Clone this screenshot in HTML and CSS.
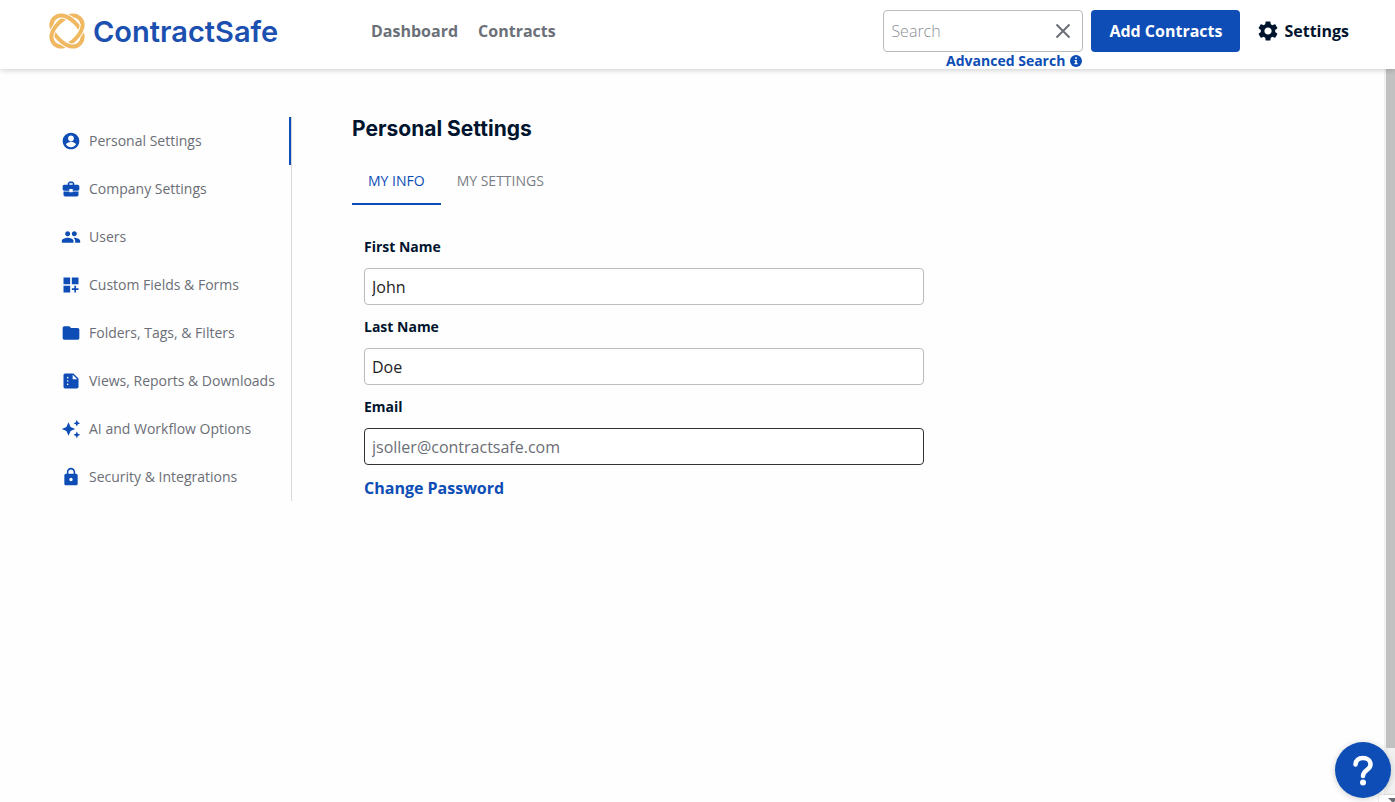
FILE: index.html
```html
<!DOCTYPE html>
<html lang="en">
<head>
    <meta charset="UTF-8">
    <meta name="viewport" content="width=device-width, initial-scale=1.0">
    <title>Personal Settings - ContractSafe</title>
    <link rel="stylesheet" href="styles.css">
</head>
<body>
    <header class="navbar">
        <a class="logo" href="/">
            <svg width="36" height="36" viewBox="-18 -18 36 36" fill="none">
                <defs>
                    <path id="ring" d="M-18 0C-18 -7.100 -11.200 -11.500 0 -11.500S18 -7.100 18 0S11.200 11.500 0 11.500S-18 7.100 -18 0z"/>
                    <clipPath id="sides">
                        <rect x="-18" y="-6" width="9" height="12"/>
                        <rect x="9" y="-6" width="9" height="12"/>
                    </clipPath>
                </defs>
                <use href="#ring" transform="rotate(-45)" stroke="#f0b860" stroke-width="4"/>
                <use href="#ring" transform="rotate(45)" stroke="#fff" stroke-width="6"/>
                <use href="#ring" transform="rotate(45)" stroke="#f0b860" stroke-width="4"/>
                <g clip-path="url(#sides)">
                    <use href="#ring" transform="rotate(-45)" stroke="#fff" stroke-width="6"/>
                    <use href="#ring" transform="rotate(-45)" stroke="#f0b860" stroke-width="4"/>
                </g>
            </svg>
            <span>ContractSafe</span>
        </a>
        <nav class="nav-links">
            <a href="/dashboard">Dashboard</a>
            <a href="/contracts">Contracts</a>
        </nav>
        <div class="nav-actions">
            <div class="search">
                <div class="search-box">
                    <input type="text" placeholder="Search" aria-label="Search">
                    <button type="button" aria-label="Clear search">
                        <svg width="16" height="16" viewBox="0 0 16 16" fill="none" stroke="#6b6e76" stroke-width="2"><path d="M1.500 1.500l13 13M14.500 1.500l-13 13"/></svg>
                    </button>
                </div>
                <a class="advanced" href="/search">Advanced Search
                    <svg width="12" height="12" viewBox="0 0 12 12"><circle cx="6" cy="6" r="6" fill="#0d4db5"/><path d="M5.200 2.300h1.700v1.500H5.200zM4.500 4.900h2.300v3.200h.8v1.200H4.400V8.100h.8v-2h-.7z" fill="#fff"/></svg>
                </a>
            </div>
            <button class="add-button" type="button">Add Contracts</button>
            <a class="settings-link" href="/settings">
                <svg width="24" height="24" viewBox="0 0 24 24"><path d="M19.140 12.940c.04-.3.06-.61.06-.94 0-.32-.02-.64-.07-.94l2.030-1.580c.18-.14.230-.41.120-.61l-1.920-3.320c-.12-.22-.37-.29-.59-.22l-2.390.96c-.5-.38-1.030-.7-1.620-.94l-.36-2.540c-.04-.24-.24-.41-.48-.41h-3.840c-.24 0-.43.17-.47.41l-.36 2.540c-.59.24-1.130.57-1.620.94l-2.390-.96c-.22-.08-.47 0-.59.22L2.740 8.870c-.12.21-.08.47.12.61l2.030 1.580c-.05.3-.09.63-.09.94s.02.64.07.94l-2.030 1.580c-.18.14-.23.41-.12.61l1.920 3.320c.12.22.37.29.59.22l2.390-.96c.5.38 1.030.7 1.620.94l.36 2.540c.05.24.24.41.48.41h3.840c.24 0 .44-.17.47-.41l.36-2.540c.59-.24 1.130-.56 1.620-.94l2.390.96c.22.08.47 0 .59-.22l1.920-3.320c.12-.22.07-.47-.12-.61l-2.010-1.580zM12 15.600c-1.980 0-3.600-1.620-3.600-3.600s1.620-3.600 3.600-3.600 3.600 1.620 3.600 3.600-1.620 3.600-3.600 3.600z"/></svg>
                Settings
            </a>
        </div>
    </header>

    <div class="page">
        <aside class="sidebar">
            <a class="active" href="/settings/personal">
                <svg viewBox="0 0 24 24"><path d="M12 2C6.480 2 2 6.480 2 12s4.480 10 10 10 10-4.480 10-10S17.520 2 12 2zm0 3.500c1.930 0 3.500 1.570 3.500 3.500s-1.570 3.500-3.500 3.500S8.500 10.930 8.500 9 10.070 5.500 12 5.500zm0 14c-2.500 0-4.710-1.280-6-3.220.03-1.990 4-3.080 6-3.080s5.970 1.090 6 3.080c-1.290 1.940-3.500 3.220-6 3.220z"/></svg>
                Personal Settings
            </a>
            <a href="/settings/company">
                <svg viewBox="0 0 24 24"><path d="M10 16v-1H3.010L3 19c0 1.110.89 2 2 2h14c1.110 0 2-.89 2-2v-4h-7v1h-4zm10-9h-4.010V5l-2-2h-4l-2 2v2H4c-1.100 0-2 .9-2 2v3c0 1.110.89 2 2 2h6v-2h4v2h6c1.100 0 2-.9 2-2V9c0-1.100-.9-2-2-2zm-6 0h-4V5h4v2z"/></svg>
                Company Settings
            </a>
            <a href="/settings/users">
                <svg viewBox="0 0 24 24"><path d="M16 11c1.660 0 2.990-1.340 2.990-3S17.660 5 16 5s-3 1.340-3 3 1.340 3 3 3zm-8 0c1.660 0 2.990-1.340 2.990-3S9.660 5 8 5 5 6.340 5 8s1.340 3 3 3zm0 2c-2.330 0-7 1.170-7 3.500V19h14v-2.500C15 14.170 10.330 13 8 13zm8 0c-.29 0-.62.02-.97.05 1.160.84 1.970 1.970 1.970 3.450V19h6v-2.500c0-2.330-4.670-3.500-7-3.500z"/></svg>
                Users
            </a>
            <a href="/settings/fields">
                <svg viewBox="0 0 24 24"><path d="M3 3h8v8H3zM13 3h8v8h-8zM3 13h8v8H3zM18 13h-2v3h-3v2h3v3h2v-3h3v-2h-3z"/></svg>
                Custom Fields &amp; Forms
            </a>
            <a href="/settings/folders">
                <svg viewBox="0 0 24 24"><path d="M10 4H4c-1.100 0-1.990.9-1.990 2L2 18c0 1.100.9 2 2 2h16c1.100 0 2-.9 2-2V8c0-1.100-.9-2-2-2h-8l-2-2z"/></svg>
                Folders, Tags, &amp; Filters
            </a>
            <a href="/settings/views">
                <svg viewBox="0 0 24 24"><path d="M15 3H5c-1.100 0-2 .9-2 2v14c0 1.100.9 2 2 2h14c1.100 0 2-.9 2-2V9l-6-6zM8 17c-.55 0-1-.45-1-1s.45-1 1-1 1 .45 1 1-.45 1-1 1zm0-4c-.55 0-1-.45-1-1s.45-1 1-1 1 .45 1 1-.45 1-1 1zm0-4c-.55 0-1-.45-1-1s.45-1 1-1 1 .45 1 1-.45 1-1 1zm6 1V4.500l5.500 5.500H14z"/></svg>
                Views, Reports &amp; Downloads
            </a>
            <a href="/settings/ai">
                <svg viewBox="0 0 24 24"><path d="M19 9l1.250-2.750L23 5l-2.750-1.250L19 1l-1.250 2.750L15 5l2.750 1.250L19 9zm-7.500.5L9 4 6.500 9.500 1 12l5.500 2.500L9 20l2.500-5.500L17 12l-5.500-2.500zM19 15l-1.250 2.750L15 19l2.750 1.250L19 23l1.250-2.750L23 19l-2.750-1.250L19 15z"/></svg>
                AI and Workflow Options
            </a>
            <a href="/settings/security">
                <svg viewBox="0 0 24 24"><path d="M18 8h-1V6c0-2.760-2.240-5-5-5S7 3.240 7 6v2H6c-1.100 0-2 .9-2 2v10c0 1.100.9 2 2 2h12c1.100 0 2-.9 2-2V10c0-1.100-.9-2-2-2zm-6 9c-1.100 0-2-.9-2-2s.9-2 2-2 2 .9 2 2-.9 2-2 2zm3.100-9H8.900V6c0-1.710 1.390-3.100 3.100-3.100s3.100 1.390 3.100 3.100v2z"/></svg>
                Security &amp; Integrations
            </a>
        </aside>

        <main class="content">
            <h1>Personal Settings</h1>
            <div class="tabs" role="tablist">
                <button class="active" type="button" role="tab" aria-selected="true">MY INFO</button>
                <button type="button" role="tab" aria-selected="false">MY SETTINGS</button>
            </div>
            <form class="info-form">
                <label for="firstName">First Name</label>
                <input type="text" id="firstName" value="John">
                <label for="lastName">Last Name</label>
                <input type="text" id="lastName" value="Doe">
                <label for="email">Email</label>
                <input type="email" id="email" value="jsoller@contractsafe.com" readonly>
                <a href="/change-password">Change Password</a>
            </form>
        </main>

        <div class="scroll-track"><div class="scroll-thumb"></div></div>
    </div>

    <div class="corner-menu"><svg width="10" height="5" viewBox="0 0 10 5"><path d="M0 0h10L5 5z" fill="#6b6e76"/></svg></div>
    <button class="help-button" type="button" aria-label="Help">
        <svg width="56" height="56" viewBox="0 0 56 56" fill="none"><path d="M20.500 22.500c.5-4.500 3.500-6.500 7.500-6.500s7.500 2.500 7.500 6.500c0 5.500-7.500 5.500-7.500 11.500" stroke="#fff" stroke-width="4.500" stroke-linecap="round"/><circle cx="28" cy="40.500" r="3" fill="#fff"/></svg>
    </button>
</body>
</html>
```
FILE: styles.css
```css
* {
    box-sizing: border-box;
}
body {
    margin: 0;
    font-family: "Open Sans", sans-serif;
    font-size: 16px;
    color: #00142e;
    background-color: #fefefe;
    min-height: 100vh;
    display: flex;
    flex-direction: column;
}
a {
    text-decoration: none;
}
button {
    font-family: inherit;
    border: none;
    background: none;
    padding: 0;
    cursor: pointer;
}

.navbar {
    display: flex;
    align-items: flex-start;
    height: 69px;
    padding: 10px 46px 0 49px;
    background-color: #fff;
    box-shadow: 0 1px 6px rgba(0, 0, 0, 0.2);
    z-index: 1;
}
.logo {
    display: flex;
    align-items: center;
    gap: 8px;
    height: 42px;
    width: 322px;
    font-family: Inter, sans-serif;
    font-size: 29px;
    font-weight: 600;
    color: #1c50b0;
}
.nav-links {
    display: flex;
    align-items: center;
    gap: 20px;
    height: 42px;
}
.nav-links a {
    font-weight: 700;
    color: #6b7078;
}
.nav-actions {
    display: flex;
    gap: 8px;
    margin-left: auto;
}
.search {
    display: flex;
    flex-direction: column;
    align-items: flex-end;
    width: 200px;
}
.search-box {
    display: flex;
    align-items: center;
    width: 100%;
    height: 42px;
    padding: 0 11px 0 7px;
    border: 1px solid #bcbcbc;
    border-radius: 4px;
}
.search-box input {
    flex: 1;
    min-width: 0;
    padding: 0;
    border: none;
    outline: none;
    font-family: inherit;
    font-size: 16px;
    font-weight: 300;
    background: none;
}
.search-box input::placeholder {
    color: #8c9096;
}
.search-box button {
    display: flex;
}
.advanced {
    display: flex;
    align-items: center;
    gap: 5px;
    padding-right: 1px;
    font-size: 14px;
    line-height: 18px;
    font-weight: 700;
    color: #0d4db5;
}
.add-button {
    height: 42px;
    padding: 0 18px;
    border-radius: 4px;
    font-size: 16px;
    font-weight: 700;
    color: #fff;
    background-color: #0d4db5;
}
.settings-link {
    display: flex;
    align-items: center;
    gap: 4px;
    height: 42px;
    padding-left: 8px;
    font-weight: 700;
    color: #00142e;
}
.settings-link svg {
    fill: #00142e;
}

.page {
    flex: 1;
    display: flex;
    align-items: flex-start;
    padding-left: 49px;
}
.sidebar {
    width: 243px;
    margin-top: 48px;
    border-right: 1px solid #d8d8d8;
}
.sidebar a {
    display: flex;
    align-items: center;
    gap: 8px;
    height: 48px;
    padding-left: 12px;
    font-size: 14px;
    line-height: 18px;
    color: #6b6e76;
}
.sidebar a.active {
    border-right: 2px solid #0d4db5;
}
.sidebar svg {
    width: 20px;
    height: 20px;
    fill: #0d4db5;
}

.content {
    flex: 1;
    padding: 48px 60px 0;
}
h1 {
    margin: 0 0 16px;
    font-family: Inter, sans-serif;
    font-size: 21px;
    line-height: 24px;
    font-weight: 700;
}
.tabs {
    display: flex;
}
.tabs button {
    height: 48px;
    padding: 0 16px;
    border-bottom: 2px solid transparent;
    font-size: 14px;
    font-weight: 400;
    color: #7b7e85;
}
.tabs .active {
    color: #0d4db5;
    border-bottom-color: #0d4db5;
}
.info-form {
    display: flex;
    flex-direction: column;
    align-items: flex-start;
    max-width: 584px;
    padding: 32px 12px;
}
.info-form label {
    margin-bottom: 11px;
    font-size: 14px;
    line-height: 20px;
    font-weight: 700;
}
.info-form input {
    width: 100%;
    height: 37px;
    margin-bottom: 12px;
    padding: 0 7px;
    border: 1px solid #bcbcbc;
    border-radius: 4px;
    font-family: inherit;
    font-size: 16px;
    color: #222;
    background-color: #fff;
}
.info-form input[readonly] {
    border-color: #333;
    color: #6b6e76;
}
.info-form a {
    line-height: 22px;
    font-weight: 700;
    color: #0d4db5;
}

.scroll-track {
    align-self: stretch;
    width: 11px;
    padding-left: 2px;
    background-color: #f1f1f1;
}
.scroll-thumb {
    height: calc(100% - 54px);
    background-color: #c1c1c1;
}
.corner-menu {
    position: fixed;
    right: 0;
    bottom: 0;
    z-index: 2;
    width: 16px;
    height: 7px;
    overflow: hidden;
    padding: 2px 0 0 9px;
    background-color: #fff;
    line-height: 0;
    box-shadow: 0 0 2px rgba(0, 0, 0, 0.3);
}
.help-button {
    position: fixed;
    right: 4px;
    bottom: 4px;
    z-index: 3;
    width: 56px;
    height: 56px;
    border-radius: 50%;
    background-color: #0d4db5;
    box-shadow: 0 1px 6px rgba(0, 0, 0, 0.2);
}
.help-button svg {
    display: block;
}
```
